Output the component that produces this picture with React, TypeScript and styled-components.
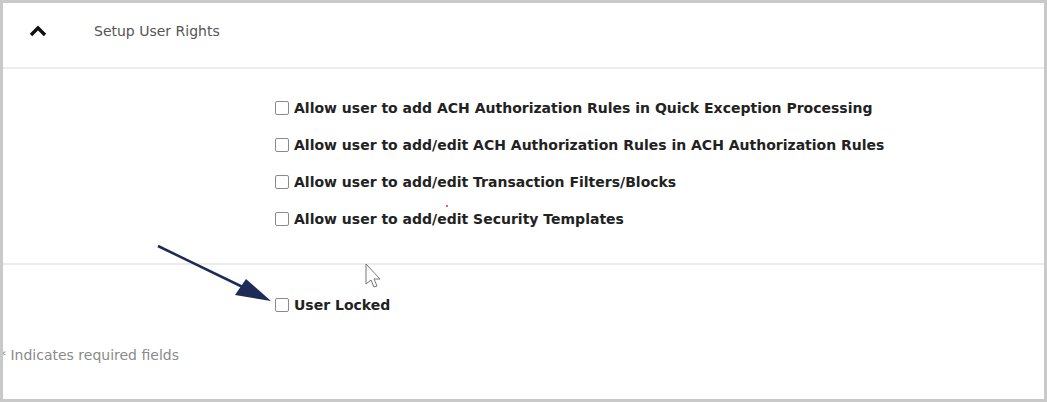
import React from "react";
import styled, { createGlobalStyle } from "styled-components";

const Global = createGlobalStyle`
  html, body { margin: 0; padding: 0; background: #fff; }
  body { font-family: "DejaVu Sans", Verdana, sans-serif; }
`;

const Frame = styled.div`
  position: relative;
  width: 1047px;
  height: 402px;
  box-sizing: border-box;
  border: 3px solid #c9c9c9;
  overflow: hidden;
  background: #fff;
  display: flex;
  flex-direction: column;
`;

const Header = styled.div`
  height: 66px;
  flex: none;
  display: flex;
  align-items: center;
  border-bottom: 2px solid #ececec;
  box-sizing: border-box;
  padding-bottom: 8px;
`;

const Toggle = styled.span`
  width: 91px;
  display: flex;
  padding-left: 25px;
  box-sizing: border-box;
  color: #111;
`;

const Title = styled.span`
  font-size: 14px;
  color: #555;
`;

const Section = styled.div<{ $h: number; $top: number }>`
  height: ${(p) => p.$h}px;
  flex: none;
  box-sizing: border-box;
  padding: ${(p) => p.$top}px 0 0 272px;
  display: flex;
  flex-direction: column;
  gap: 21px;
`;

const Rights = styled(Section)`
  border-bottom: 2px solid #ececec;
`;

const Option = styled.label`
  display: flex;
  align-items: center;
  gap: 5px;
  height: 16px;
  font-size: 14px;
  font-weight: bold;
  color: #222;
`;

const Box = styled.span`
  width: 12px;
  height: 12px;
  border: 1px solid #8a8a8a;
  border-radius: 2px;
  background: #fff;
  flex: none;
`;

const Note = styled.div`
  margin-left: -4px;
  font-size: 14px;
  color: #8a8a8a;
`;

const Overlay = styled.svg`
  position: absolute;
  left: 0;
  top: 0;
  pointer-events: none;
`;

const rights = [
  "Allow user to add ACH Authorization Rules in Quick Exception Processing",
  "Allow user to add/edit ACH Authorization Rules in ACH Authorization Rules",
  "Allow user to add/edit Transaction Filters/Blocks",
  "Allow user to add/edit Security Templates",
];

const Chevron = () => (
  <svg width="20" height="14" viewBox="0 0 20 14">
    <path d="M3 11 L10 4 L17 11" fill="none" stroke="#111" strokeWidth="3.4" />
  </svg>
);

export default function App() {
  return (
    <>
      <Global />
      <Frame>
        <Header>
          <Toggle>
            <Chevron />
          </Toggle>
          <Title>Setup User Rights</Title>
        </Header>
        <Rights $h={196} $top={31}>
          {rights.map((r) => (
            <Option key={r}>
              <Box />
              {r}
            </Option>
          ))}
        </Rights>
        <Section $h={82} $top={32}>
          <Option>
            <Box />
            User Locked
          </Option>
        </Section>
        <Note>* Indicates required fields</Note>
        <Overlay width="1047" height="402">
          <line x1="155" y1="243" x2="250" y2="289" stroke="#1e2b57" strokeWidth="2.5" />
          <polygon points="268,298 232,292 243,276" fill="#1e2b57" />
          <circle cx="444" cy="203" r="1" fill="#e03030" />
          <path
            d="M363 261 L363 281 L368 277 L371 284 L374 283 L371 276 L377 276 Z"
            fill="#fff"
            stroke="#777"
            strokeWidth="1"
          />
        </Overlay>
      </Frame>
    </>
  );
}
